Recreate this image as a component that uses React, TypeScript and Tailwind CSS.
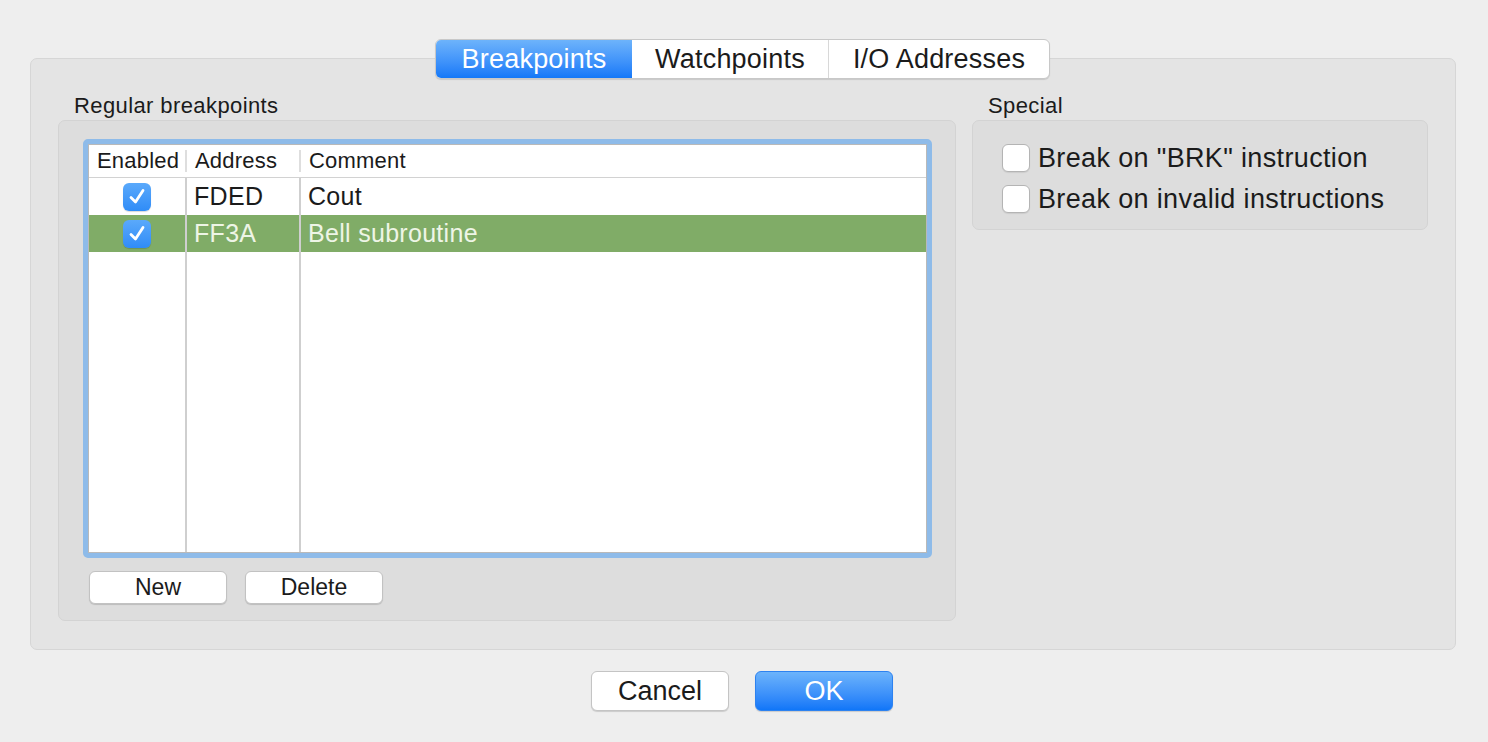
import React from "react";

const font = { fontFamily: '"Liberation Sans", Arial, sans-serif' };

function CheckBox({ checked }: { checked?: boolean }) {
  if (checked) {
    return (
      <div className="w-[28px] h-[28px] rounded-[6px] bg-gradient-to-b from-[#5aa9fb] to-[#2f8cf7] flex items-center justify-center shadow-[0_1px_1px_rgba(0,0,0,0.15)]">
        <svg width="22" height="22" viewBox="0 0 22 22">
          <path d="M5 11.5 L9.5 16 L17 4.5" fill="none" stroke="white" strokeWidth="2.8" strokeLinecap="round" strokeLinejoin="round" />
        </svg>
      </div>
    );
  }
  return (
    <div className="w-[28px] h-[28px] rounded-[6px] bg-white border border-[#b4b4b4] shadow-[0_1px_1px_rgba(0,0,0,0.08)]" />
  );
}

const rows = [
  { enabled: true, address: "FDED", comment: "Cout", selected: false },
  { enabled: true, address: "FF3A", comment: "Bell subroutine", selected: true },
];

export default function App() {
  return (
    <div className="w-[1488px] h-[742px] bg-[#eeeeee] text-[#1b1b1b] overflow-hidden" style={font}>
      <div className="pt-[58px] px-[30px]">
        {/* tab view */}
        <div className="relative h-[592px] w-[1426px] rounded-[7px] bg-[#e4e4e4] border border-[#d6d6d6] flex gap-[16px] pl-[27px] pr-[27px] pt-[35px]">
          {/* segmented tabs */}
          <div className="absolute left-[404px] top-[-20px] flex h-[40px] rounded-[6px] bg-white border border-[#c8c8c8] shadow-[0_1px_1px_rgba(0,0,0,0.12)] text-[27px] tracking-[0.2px] leading-none overflow-hidden">
            <div className="w-[196px] flex items-center justify-center text-white bg-gradient-to-b from-[#6db3fb] to-[#1278f8]">
              Breakpoints
            </div>
            <div className="w-[197px] flex items-center justify-center border-r border-[#d8d8d8]">
              Watchpoints
            </div>
            <div className="w-[220px] flex items-center justify-center">
              I/O Addresses
            </div>
          </div>

          {/* regular breakpoints */}
          <div className="w-[898px] flex flex-col">
            <div className="text-[22px] tracking-[0.4px] leading-[24px] pl-[16px] mb-[2px]">Regular breakpoints</div>
            <div className="h-[501px] rounded-[7px] bg-[#dddddd] border border-[#d3d3d3] pt-[18px] pl-[24px] pr-[23px]">
              <div className="h-[419px] rounded-[5px] border-[5px] border-[#8ebbe9]">
                <div className="h-full bg-white border border-[#b9b9b9] flex flex-col">
                  {/* header */}
                  <div className="flex h-[33px] items-center border-b border-[#d2d2d2] text-[22px] tracking-[0.2px] leading-none">
                    <div className="w-[98px] pl-[8px] border-r-2 border-[#dedede] h-[22px] flex items-center">Enabled</div>
                    <div className="w-[114px] pl-[8px] border-r-2 border-[#dedede] h-[22px] flex items-center">Address</div>
                    <div className="flex-1 pl-[8px]">Comment</div>
                  </div>
                  {/* body */}
                  <div className="flex-1 relative flex flex-col">
                    {rows.map((r) => (
                      <div
                        key={r.address}
                        className={`flex h-[37px] items-center text-[25px] tracking-[0.3px] leading-none ${r.selected ? "bg-[#80ac67] text-[#eef5e6]" : ""}`}
                      >
                        <div className="w-[98px] h-full flex items-center justify-center border-r-2 border-[#cfcfcf]">
                          <CheckBox checked={r.enabled} />
                        </div>
                        <div className="w-[114px] h-full flex items-center pl-[7px] border-r-2 border-[#cfcfcf]">{r.address}</div>
                        <div className="flex-1 pl-[7px]">{r.comment}</div>
                      </div>
                    ))}
                    <div className="flex-1 flex">
                      <div className="w-[98px] border-r-2 border-[#cfcfcf]" />
                      <div className="w-[114px] border-r-2 border-[#cfcfcf]" />
                    </div>
                  </div>
                </div>
              </div>
              <div className="flex gap-[18px] mt-[13px] pl-[6px] text-[23px] leading-none">
                <button className="w-[138px] h-[33px] rounded-[6px] bg-white border border-[#c2c2c2] shadow-[0_1px_1px_rgba(0,0,0,0.15)]">New</button>
                <button className="w-[138px] h-[33px] rounded-[6px] bg-white border border-[#c2c2c2] shadow-[0_1px_1px_rgba(0,0,0,0.15)]">Delete</button>
              </div>
            </div>
          </div>

          {/* special */}
          <div className="w-[456px] flex flex-col">
            <div className="text-[22px] tracking-[0.4px] leading-[24px] pl-[16px] mb-[2px]">Special</div>
            <div className="h-[110px] rounded-[7px] bg-[#dddddd] border border-[#d3d3d3] pl-[29px] pt-[23px] flex flex-col gap-[13px] text-[27px] tracking-[0.35px] leading-none">
              <label className="flex items-center gap-[8px]">
                <CheckBox />
                <span>Break on "BRK" instruction</span>
              </label>
              <label className="flex items-center gap-[8px]">
                <CheckBox />
                <span>Break on invalid instructions</span>
              </label>
            </div>
          </div>
        </div>

        {/* dialog buttons */}
        <div className="flex justify-center gap-[26px] mt-[21px] pr-[4px] text-[27px] leading-none">
          <button className="w-[138px] h-[40px] rounded-[6px] bg-white border border-[#c4c4c4] shadow-[0_1px_1px_rgba(0,0,0,0.15)]">Cancel</button>
          <button className="w-[138px] h-[40px] rounded-[6px] text-white bg-gradient-to-b from-[#6cb3fb] to-[#0f76f8] border border-[#2d82f0] shadow-[0_1px_1px_rgba(0,0,0,0.15)]">OK</button>
        </div>
      </div>
    </div>
  );
}
